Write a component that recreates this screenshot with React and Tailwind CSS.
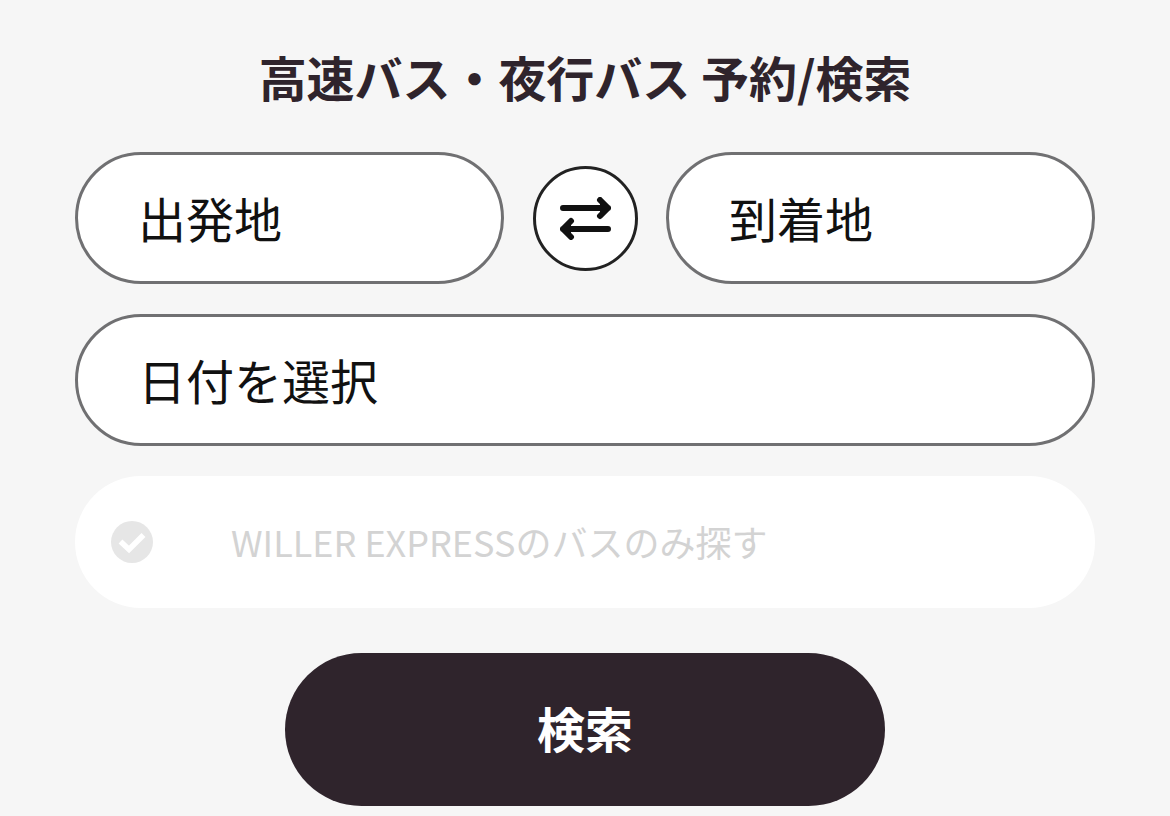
import { useState } from "react";

const fieldClass =
  "flex h-33 items-center rounded-full border-[3px] border-[#707072] bg-white px-[60px] pb-[3px] text-left text-5xl font-normal text-[#111111]";

function SwapIcon() {
  return (
    <svg width="51" height="43" viewBox="0 0 51 43" fill="none" stroke="#111" strokeWidth="6" strokeLinecap="round" strokeLinejoin="round">
      <path d="M3 11H48M40 3l8 8-8 8" />
      <path d="M48 32H3M11 24l-8 8 8 8" />
      <path d="M40 5v12l7-6zM11 26v12l-7-6z" fill="#111" stroke="none" />
    </svg>
  );
}

function CheckIcon() {
  return (
    <svg width="42" height="42" viewBox="0 0 42 42" fill="none">
      <circle cx="21" cy="21" r="21" fill="#e6e6e6" />
      <path d="M9.5 20.5l8.5 8 14.5-14.5" stroke="#fff" strokeWidth="5.5" />
    </svg>
  );
}

export default function App() {
  const [from, setFrom] = useState("出発地");
  const [to, setTo] = useState("到着地");

  const swap = () => {
    setFrom(to);
    setTo(from);
  };

  return (
    <main className="flex h-screen flex-col overflow-hidden bg-[#f6f6f6] px-[75px] pt-[42px] font-['Noto_Sans_CJK_JP',sans-serif]">
      <h1 className="h-[110px] text-center text-5xl leading-[68px] font-bold tracking-[-0.05px] text-[#2f242c]">高速バス・夜行バス 予約/検索</h1>
      <div className="flex items-center justify-between">
        <button className={`${fieldClass} w-[429px]`}>{from}</button>
        <button onClick={swap} className="flex size-[105px] items-center justify-center rounded-full border-[3px] border-[#222] bg-white">
          <SwapIcon />
        </button>
        <button className={`${fieldClass} w-[429px]`}>{to}</button>
      </div>
      <button className={`${fieldClass} mt-[30px] shrink-0`}>日付を選択</button>
      <label className="mt-[30px] flex h-33 shrink-0 items-center rounded-full bg-white pl-9 text-4xl text-[#d3d3d3]">
        <CheckIcon />
        <span className="ml-[78px] pb-0.5">WILLER EXPRESSのバスのみ探す</span>
      </label>
      <button className="mx-auto mt-[45px] h-[153px] w-[600px] shrink-0 rounded-full bg-[#2f242c] pb-1.5 text-5xl font-bold text-white">検索</button>
    </main>
  );
}
